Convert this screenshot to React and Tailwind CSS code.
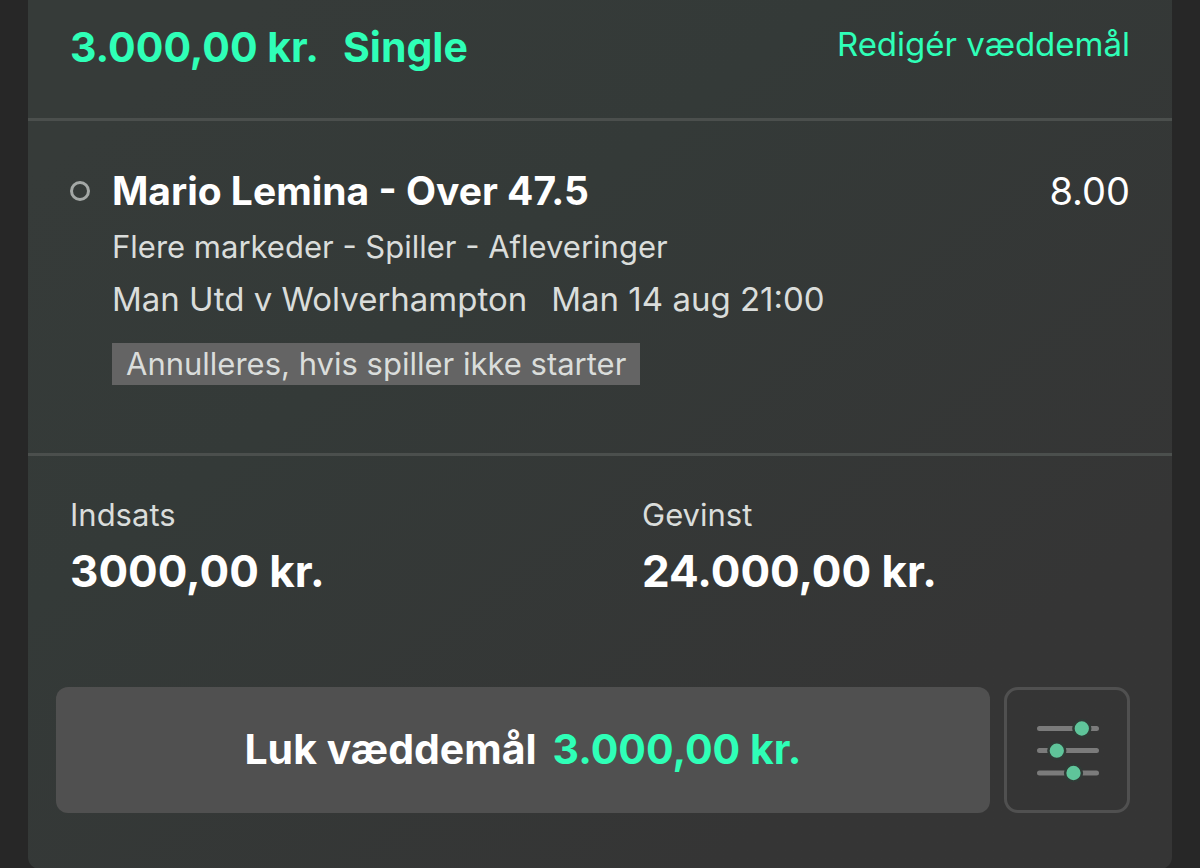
export default function App() {
  return (
    <div className="min-h-screen bg-[#272727] px-7 font-[Inter,sans-serif] text-white">
      <main className="rounded-b-xl bg-linear-to-br from-[#363b39] from-10% via-[#343a38] via-35% to-[#353535] to-80%">
        <header className="flex h-[118px] items-start justify-between px-[42px] pt-5">
          <h1 className="flex gap-6 text-[41px] leading-[54px] font-bold text-[#2fffb7]">
            <span>3.000,00 kr.</span>
            <span>Single</span>
          </h1>
          <a href="#edit" className="text-[33px] leading-[48px] text-[#2fffb7]">Redigér væddemål</a>
        </header>
        <section className="border-t-[3px] border-[#4b4f4d] px-[42px] pt-11 pb-[68px]">
          <div className="flex items-center">
            <span className="mr-[22px] size-5 rounded-full border-[3px] border-[#a4a8a6]" />
            <h2 className="grow text-[39px] leading-[52px] font-bold">Mario Lemina - Over 47.5</h2>
            <span className="text-[38px] leading-[52px]">8.00</span>
          </div>
          <div className="flex flex-col items-start pl-[42px] text-[#dadddb]">
            <p className="text-[31px] leading-[60px]">Flere markeder - Spiller - Afleveringer</p>
            <p className="flex gap-6 text-[33px] leading-[44px]">
              <span>Man Utd v Wolverhampton</span>
              <span>Man 14 aug 21:00</span>
            </p>
            <p className="mt-[22px] bg-[#646464] px-[14px] text-[31px] leading-[42px]">Annulleres, hvis spiller ikke starter</p>
          </div>
        </section>
        <section className="border-t-[3px] border-[#4b4f4d] pt-[39px] pb-14">
          <dl className="grid grid-cols-2">
            <div className="pl-[42px]">
              <dt className="text-[31px] leading-[40px] text-[#dadddb]">Indsats</dt>
              <dd className="text-[44px] leading-[72px] font-bold">3000,00 kr.</dd>
            </div>
            <div className="pl-[42px]">
              <dt className="text-[31px] leading-[40px] text-[#dadddb]">Gevinst</dt>
              <dd className="text-[44px] leading-[72px] font-bold">24.000,00 kr.</dd>
            </div>
          </dl>
          <div className="mt-20 flex gap-[14px] pr-[42px] pl-7">
            <button className="flex h-[126px] grow items-center justify-center gap-4 rounded-xl bg-[#505050] text-[41px] font-bold">
              <span>Luk væddemål</span>
              <span className="text-[#2fffb7]">3.000,00 kr.</span>
            </button>
            <button aria-label="Indstillinger" className="flex size-[126px] items-center justify-center rounded-[14px] border-[3px] border-[#505050]">
              <svg width="64" height="64" viewBox="0 0 64 64">
                <path d="M4.5 10.5H61.5M4.5 32.5H61.5M4.5 55H61.5" stroke="#7b7b7b" strokeWidth="5" strokeLinecap="round" />
                <g fill="#5fc59a" stroke="#303a36" strokeWidth="2.5">
                  <circle cx="46.8" cy="10.5" r="8.4" />
                  <circle cx="21.8" cy="32.7" r="8.4" />
                  <circle cx="38.5" cy="55" r="8.4" />
                </g>
              </svg>
            </button>
          </div>
        </section>
      </main>
    </div>
  );
}
